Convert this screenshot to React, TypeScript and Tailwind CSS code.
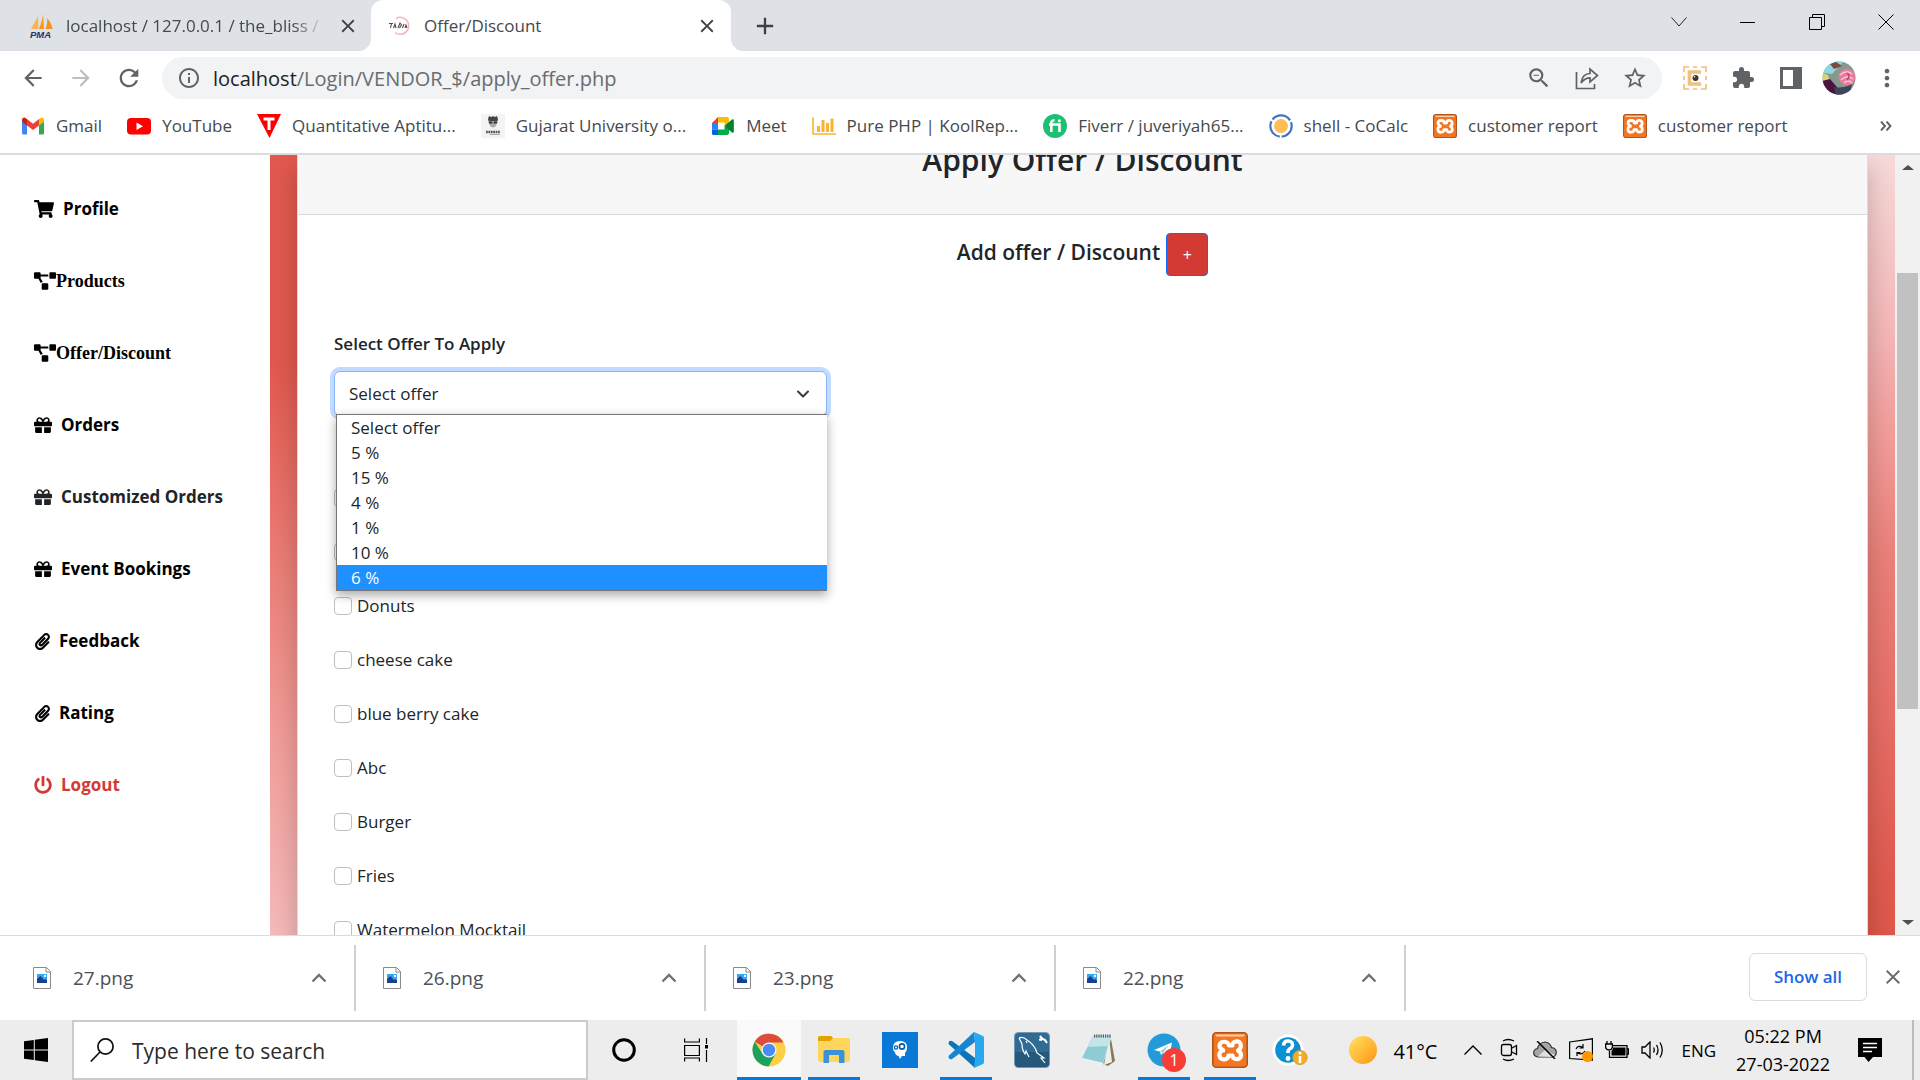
import React from "react";
import { FaShoppingCart, FaProjectDiagram, FaGift, FaPaperclip, FaPowerOff } from "react-icons/fa";
import {
  MdArrowBack,
  MdArrowForward,
  MdRefresh,
  MdStarBorder,
  MdExtension,
  MdMoreVert,
  MdClose,
  MdAdd,
  MdInfoOutline,
  MdZoomOut,
} from "react-icons/md";

const Sailboat = () => (
  <svg viewBox="0 0 24 24" className="size-6 shrink-0" aria-hidden="true">
    <path d="M8 2 L8.5 15 L1 15 C3 11 6 6 8 2Z" fill="#fbb45c" />
    <path d="M13 0 L14 15 L9 15 C11 10 12.500 5 13 0Z" fill="#f89c0e" />
    <path d="M17 4 C20 7 22 11 22.500 15 L15.500 15 C17 11 17.500 8 17 4Z" fill="#f6941f" />
    <text x="0" y="23.500" fontSize="9.500" fontWeight="700" fontStyle="italic" fill="#2c2f63" fontFamily="Liberation Sans, sans-serif">PMA</text>
  </svg>
);

const BlissMark = () => (
  <svg viewBox="0 0 24 24" className="size-6 shrink-0" aria-hidden="true">
    <path d="M8 4.500 A8.500 8.500 0 1 1 7 18.500" fill="none" stroke="#f2b6ba" strokeWidth="1.500" />
    <path d="M1 9.500 H5 M3.500 9.500 L2.500 14 M5.500 14 L7 10 L8 14 M10 14 L12 9 L13.500 11 L11.500 14 M14.500 14 L16 10 M17 14 L18 11 L19 14" fill="none" stroke="#55494c" strokeWidth="1.100" />
  </svg>
);

const Gmail = () => (
  <svg viewBox="0 0 24 24" className="size-6" aria-hidden="true">
    <path d="M1 6 V19 Q1 20.500 2.500 20.500 H6 V10Z" fill="#4285f4" />
    <path d="M23 6 V19 Q23 20.500 21.500 20.500 H18 V10Z" fill="#34a853" />
    <path d="M6 5 L12 9.700 L18 5 V11.500 L12 16 L6 11.500Z" fill="#ea4335" />
    <path d="M1 6 Q1 3.500 3.500 3.500 L6 5 V11.500 L1 7.800Z" fill="#c5221f" />
    <path d="M23 6 Q23 3.500 20.500 3.500 L18 5 V11.500 L23 7.800Z" fill="#fbbc04" />
  </svg>
);

const YouTube = () => (
  <svg viewBox="0 0 24 24" className="size-6" aria-hidden="true">
    <rect x="0" y="4" width="24" height="16.500" rx="4" fill="#f00" />
    <path d="M9.500 8.500 L16 12.200 L9.500 16Z" fill="#fff" />
  </svg>
);

const Testbook = () => (
  <svg viewBox="0 0 24 24" className="size-6" aria-hidden="true">
    <path d="M0 0 H24 L12.500 24Z" fill="#f00" />
    <path d="M6.500 3.500 H17.500 V6.500 H13.500 V16 H10.500 V6.500 H6.500Z" fill="#fff" />
  </svg>
);

const Genius = () => (
  <svg viewBox="0 0 24 24" className="size-6" aria-hidden="true">
    <rect width="24" height="24" fill="#f3f3f3" />
    <path d="M7 5 L8 2 L10 3 Q12 1.500 14 3 L16 2 L17 5 L16.500 7 H7.500Z" fill="#444" />
    <path d="M8 7 Q8 13 12 13.500 Q16 13 16 7Z" fill="#aaa" />
    <path d="M7.500 7.500 H11.300 V9.500 H8Z M12.700 7.500 H16.500 L16 9.500 H12.700Z" fill="#333" />
    <path d="M5 18 H19" stroke="#555" strokeWidth="2.400" strokeDasharray="1.800 .6" />
    <path d="M9 20.500 H19" stroke="#aaa" strokeWidth="1" />
  </svg>
);

const Meet = () => (
  <svg viewBox="0 0 24 24" className="size-6" aria-hidden="true">
    <path d="M1 9 L7 3 V9Z" fill="#ea4335" />
    <path d="M7 3 H16 Q18 3 18 5 V9 L13.500 12 V8.500 H7Z" fill="#fbbc04" />
    <path d="M1 9 H7 V15.500 H1Z" fill="#2684fc" />
    <path d="M1 15.500 H7 V21 H2.500 Q1 21 1 19.500Z" fill="#0066da" />
    <path d="M7 15.500 H13.500 V12 L18 15 V19 Q18 21 16 21 H7Z" fill="#00ac47" />
    <path d="M13.500 12 L21 5.500 Q22.800 4.500 22.800 6.500 V17.500 Q22.800 19.500 21 18.500Z" fill="#00832d" />
  </svg>
);

const Kool = () => (
  <svg viewBox="0 0 24 24" className="size-6" aria-hidden="true">
    <path d="M1 3.500 V20 H24" fill="none" stroke="#fbb230" strokeWidth="1.600" />
    <path d="M5 12 H8 V18 H5Z M9.500 6 H12.500 V18 H9.500Z M14 9 H17 V18 H14Z M18.500 4.500 H21.500 V18 H18.500Z" fill="#fbb230" />
  </svg>
);

const Fiverr = () => (
  <svg viewBox="0 0 24 24" className="size-6" aria-hidden="true">
    <circle cx="12" cy="12" r="12" fill="#1dbf73" />
    <path d="M8.300 18 V9 Q8.300 6.200 11.500 6.600 M6 10.500 H16.500 V18" fill="none" stroke="#fff" strokeWidth="2.600" />
    <circle cx="16.300" cy="6.800" r="1.500" fill="#fff" />
  </svg>
);

const CoCalc = () => (
  <svg viewBox="0 0 24 24" className="size-6" aria-hidden="true">
    <circle cx="12" cy="12" r="7" fill="#fdbf56" />
    <circle cx="12" cy="12" r="10.700" fill="none" stroke="#4474c0" strokeWidth="2.200" strokeDasharray="20.400 2" strokeDashoffset="-18" />
  </svg>
);

const Xampp = ({ className }: { className: string }) => (
  <svg viewBox="0 0 36 36" className={className} aria-hidden="true">
    <rect x=".8" y=".8" width="34.400" height="34.400" rx="3.500" fill="#f37623" stroke="#b3541a" strokeWidth="1.600" />
    <path d="M3 2.500 H33 L31.500 4.500 H4.500Z" fill="#fbd0a8" />
    <path
      d="M17 13.500 C17 9 8 8 7.500 13.500 C7.500 17 10.500 17 11.500 18.500 C8 19 7 21 7.500 24 C8.500 29 17 28 16.500 23.500 H20.500 C20 28 29 28.500 29 23.500 C29 21 28 19.500 26 18.500 C28.500 17 29.500 15 28.500 12 C27 8 19.500 9 20.500 13.500Z"
      fill="none"
      stroke="#fff"
      strokeWidth="4.200"
      strokeLinejoin="round"
    />
    <path d="M13 18.500 H24" stroke="#f37623" strokeWidth="2" />
  </svg>
);

const bookmarks: { label: string; icon: React.ReactNode }[] = [
  { label: "Gmail", icon: <Gmail /> },
  { label: "YouTube", icon: <YouTube /> },
  { label: "Quantitative Aptitu...", icon: <Testbook /> },
  { label: "Gujarat University o...", icon: <Genius /> },
  { label: "Meet", icon: <Meet /> },
  { label: "Pure PHP | KoolRep...", icon: <Kool /> },
  { label: "Fiverr / juveriyah65...", icon: <Fiverr /> },
  { label: "shell - CoCalc", icon: <CoCalc /> },
  { label: "customer report", icon: <Xampp className="size-6" /> },
  { label: "customer report", icon: <Xampp className="size-6" /> },
];

function TabStrip() {
  return (
    <div className="flex h-[51px] shrink-0 bg-[#dee1e6] text-[17px] text-[#45494d]">
      <div className="flex w-[371px] items-center gap-3 pr-[11px] pl-[30px]">
        <Sailboat />
        <span className="min-w-0 flex-1 overflow-hidden whitespace-nowrap [mask-image:linear-gradient(to_right,black_88%,transparent)]">
          localhost / 127.0.0.1 / the_bliss / o
        </span>
        <button aria-label="Close tab" className="grid size-6 place-items-center text-[#3c4043]">
          <MdClose className="size-[22px]" />
        </button>
      </div>
      <div className="relative flex w-[360px] items-center gap-3 rounded-t-xl bg-white pr-3 pl-[17px] before:absolute before:bottom-0 before:-left-3 before:size-3 before:bg-[radial-gradient(circle_at_0_0,transparent_12px,white_12px)] after:absolute after:-right-3 after:bottom-0 after:size-3 after:bg-[radial-gradient(circle_at_100%_0,transparent_12px,white_12px)]">
        <BlissMark />
        <span className="flex-1 whitespace-nowrap">Offer/Discount</span>
        <button aria-label="Close tab" className="grid size-6 place-items-center text-[#3c4043]">
          <MdClose className="size-[22px]" />
        </button>
      </div>
      <button aria-label="New tab" className="ml-5 grid w-6 place-items-center text-[#3c4043]">
        <MdAdd className="size-7" />
      </button>
      <div className="ml-auto flex h-[43px]">
        <button aria-label="Search tabs" className="grid w-[69px] place-items-center">
          <svg viewBox="0 0 16 16" className="size-4"><path d="M.5 3.500 L8 12 L15.500 3.500" fill="none" stroke="#222" /></svg>
        </button>
        <button aria-label="Minimize" className="grid w-[69px] place-items-center">
          <svg viewBox="0 0 16 16" className="size-4"><path d="M0 8.500 H15" stroke="#000" /></svg>
        </button>
        <button aria-label="Restore" className="grid w-[69px] place-items-center">
          <svg viewBox="0 0 16 16" className="size-4"><path d="M.5 3.500 H12.500 V15.500 H.5Z M3.500 3.500 V.5 H15.500 V12.500 H12.500" fill="none" stroke="#000" /></svg>
        </button>
        <button aria-label="Close window" className="grid w-[69px] place-items-center">
          <svg viewBox="0 0 16 16" className="size-4"><path d="M.5 .5 L15.500 15.500 M15.500 .5 L.5 15.500" stroke="#000" /></svg>
        </button>
      </div>
    </div>
  );
}

function Toolbar() {
  return (
    <div className="flex h-[54px] shrink-0 items-center pr-[9px] pl-[9px] text-[#5f6368]">
      <button aria-label="Back" className="grid w-12 place-items-center"><MdArrowBack className="size-[26px]" /></button>
      <button aria-label="Forward" className="grid w-12 place-items-center text-[#bcbec1]"><MdArrowForward className="size-[26px]" /></button>
      <button aria-label="Reload" className="grid w-12 place-items-center"><MdRefresh className="size-7" /></button>
      <div className="ml-[9px] flex h-[42px] flex-1 items-center rounded-full bg-[#f1f3f4] pr-[3px] pl-[15px]">
        <MdInfoOutline className="size-6 shrink-0" />
        <div className="ml-3 flex-1 pt-px text-[20px] text-[#696c70]">
          <span className="text-[#202124]">localhost</span>/Login/VENDOR_$/apply_offer.php
        </div>
        <button aria-label="Zoom" className="grid w-12 place-items-center"><MdZoomOut className="size-[26px]" /></button>
        <button aria-label="Share" className="grid w-12 place-items-center">
          <svg viewBox="0 0 24 24" className="size-6" fill="none" stroke="currentColor" strokeWidth="1.700">
            <path d="M1.500 6 V22.500 H19.500 V18" />
            <path d="M6 17 C7 10.500 10 7.500 15 7.500 V3 L22.500 9.500 L15 16 V11.800 C11 11.800 8.500 13.500 6 17Z" />
          </svg>
        </button>
        <button aria-label="Bookmark this page" className="grid w-12 place-items-center"><MdStarBorder className="size-[26px]" /></button>
      </div>
      <button aria-label="Screen capture" className="ml-[9px] grid w-12 place-items-center">
        <svg viewBox="0 0 24 24" className="size-6" fill="none">
          <path d="M1 6 V1 H6 M10 1 H14 M18 1 H23 V6 M1 18 V23 H6 M10 23 H14 M18 23 H23 V18 M1 10 V14 M23 10 V14" stroke="#f0bd7b" strokeWidth="1.600" />
          <path d="M18 6 H6.500 V18 H18" stroke="#f0c07e" strokeWidth="3.600" />
          <circle cx="12.500" cy="12" r="3" fill="#3b3530" />
          <circle cx="11.500" cy="10.800" r=".8" fill="#fff" />
        </svg>
      </button>
      <button aria-label="Extensions" className="grid w-12 place-items-center"><MdExtension className="size-6" /></button>
      <button aria-label="Side panel" className="grid w-12 place-items-center">
        <svg viewBox="0 0 22 22" className="size-[22px]"><path d="M0 0 H22 V22 H0Z M3 3 V19 H13 V3Z" fill="currentColor" fillRule="evenodd" /></svg>
      </button>
      <button aria-label="Account" className="grid w-12 place-items-center">
        <svg viewBox="0 0 34 34" className="size-[34px]">
          <defs><clipPath id="avatar"><circle cx="17" cy="17" r="16.500" /></clipPath></defs>
          <g clipPath="url(#avatar)">
            <rect width="34" height="34" fill="#87988c" />
            <path d="M0 0 H22 L10 13 L0 12Z" fill="#8fd7e0" />
            <path d="M8 3 L14 1 L20 5 L12 8Z" fill="#7a4a3c" />
            <path d="M0 12 L6 14 L8 20 L0 22Z" fill="#d8d27a" />
            <path d="M0 20 L8 18 L14 25 L22 34 H0Z" fill="#4b1440" />
            <path d="M12 26 Q20 28 30 23 L28 34 H14Z" fill="#39465e" />
            <circle cx="25" cy="16" r="8.500" fill="#e77c9c" />
            <path d="M18 14 Q24 8 30 13 M19 19 Q25 13 31 18 M22 22 Q26 18 30 22" stroke="#f9c4d2" strokeWidth="1.600" fill="none" />
            <path d="M25 12 Q29 15 25 19" stroke="#bf3f6c" strokeWidth="1.500" fill="none" />
          </g>
        </svg>
      </button>
      <button aria-label="Menu" className="grid w-12 place-items-center"><MdMoreVert className="size-7" /></button>
    </div>
  );
}

function BookmarksBar() {
  return (
    <nav aria-label="Bookmarks" className="flex h-[50px] shrink-0 items-center gap-[25px] border-b-2 border-[#dadcde] pr-7 pb-[6px] pl-[21px] text-[17px] text-[#45494d]">
      {bookmarks.map((b, i) => (
        <a key={i} href="#" className="flex items-center gap-[11px] whitespace-nowrap">
          {b.icon}
          {b.label}
        </a>
      ))}
      <button aria-label="More bookmarks" className="ml-auto">
        <svg viewBox="0 0 12 10" className="h-[10px] w-3"><path d="M1 .5 L5 5 L1 9.500 M6.500 .5 L10.500 5 L6.500 9.500" fill="none" stroke="#5f6368" strokeWidth="1.900" /></svg>
      </button>
    </nav>
  );
}

const gift = <FaGift className="size-[18px]" />;
const clip = <FaPaperclip className="size-[17px]" />;
const diagram = <FaProjectDiagram className="h-[18px] w-[22px]" />;

function Sidebar() {
  const items = [
    { label: "Profile", icon: <FaShoppingCart className="h-[18px] w-5" />, cls: "gap-[9px]" },
    { label: "Products", icon: diagram, cls: "font-['Liberation_Serif',serif] text-[18px]" },
    { label: "Offer/Discount", icon: diagram, cls: "font-['Liberation_Serif',serif] text-[18px]" },
    { label: "Orders", icon: gift, cls: "gap-[9px]" },
    { label: "Customized Orders", icon: gift, cls: "gap-[9px] text-[#212529]" },
    { label: "Event Bookings", icon: gift, cls: "gap-[9px]" },
    { label: "Feedback", icon: clip, cls: "gap-2" },
    { label: "Rating", icon: clip, cls: "gap-2" },
    { label: "Logout", icon: <FaPowerOff className="size-[18px]" />, cls: "gap-[9px] text-[#d33a33]" },
  ];
  return (
    <nav aria-label="Vendor" className="z-20 flex w-[270px] shrink-0 flex-col bg-white pt-[18px] pl-[34px] font-bold text-[17px] text-black">
      {items.map((it) => (
        <a key={it.label} href="#" className={`flex h-[72px] items-center whitespace-nowrap ${it.cls}`}>
          {it.icon}
          {it.label}
        </a>
      ))}
    </nav>
  );
}

const offers = ["Select offer", "5 %", "15 %", "4 %", "1 %", "10 %", "6 %"];
/* The first two products have no name yet. */
const products = ["", "", "Donuts", "cheese cake", "blue berry cake", "Abc", "Burger", "Fries", "Watermelon Mocktail"];

function OfferForm() {
  return (
    <form className="px-9 pt-[17px] text-[17px] text-[#212529]">
      <div className="flex justify-center gap-[6px]">
        <h2 className="pt-[5px] text-[21px] leading-[30px] font-semibold">Add offer / Discount</h2>
        <button type="button" aria-label="Add offer" className="mt-px h-[43px] w-[42px] rounded border border-[#0d6efd] bg-[#d33a33] text-[16px] text-white">
          +
        </button>
      </div>
      <label htmlFor="offer" className="mt-[54px] block leading-[27px] font-semibold">Select Offer To Apply</label>
      <div className="relative mt-[14px] w-[493px]">
        <select id="offer" defaultValue="Select offer" className="block h-[45px] w-full appearance-none rounded-md border border-[#86b7fe] bg-white px-[14px] ring-4 ring-[#c2dbfe] outline-none">
          {offers.map((o) => (
            <option key={o}>{o}</option>
          ))}
        </select>
        <svg viewBox="0 0 16 16" className="pointer-events-none absolute top-[15px] right-4 size-4" aria-hidden="true">
          <path d="M3 5.500 L8 10.500 L13 5.500" fill="none" stroke="#343a40" strokeWidth="2" strokeLinecap="round" strokeLinejoin="round" />
        </svg>
        <ul role="listbox" aria-label="Offers" className="absolute top-[43px] right-0 left-[2px] z-10 border border-r-0 border-[#767676] bg-white shadow-[0_4px_10px_rgba(0,0,0,0.35)]">
          {offers.map((o) => (
            <li
              key={o}
              role="option"
              aria-selected={o === "6 %"}
              className="flex h-[25px] items-center px-[14px] whitespace-pre aria-selected:bg-[#1e90ff] aria-selected:text-white"
            >
              {o}
            </li>
          ))}
        </ul>
      </div>
      <fieldset aria-label="Products" className="pt-[55px]">
        {products.map((p, i) => (
          <label key={i} className="flex h-[54px] items-center gap-[5px]">
            <input type="checkbox" aria-label={p || "Product"} className="size-[18px] appearance-none rounded border border-[#bfbfbf] bg-white" />
            {p}
          </label>
        ))}
      </fieldset>
    </form>
  );
}

function PageView() {
  return (
    <div className="flex min-h-0 flex-1 overflow-hidden">
      <Sidebar />
      <div className="w-[27px] shrink-0 bg-[linear-gradient(177deg,#e1594e_0%,#e1594e_27%,#ea7a73_50%,#f19c98_74%,#f5baba_100%)]" />
      <main className="z-10 h-fit min-w-0 flex-1 border-x border-[#dcdcdc] bg-white shadow-[0_12px_24px_rgba(0,0,0,0.22)]">
        <header className="-mt-5 h-20 border-b border-[#d9d9d9] bg-[#f7f7f7]">
          <h1 className="pt-[3px] text-center text-[30px] leading-[44px] font-semibold text-[#212529]">Apply Offer / Discount</h1>
        </header>
        <OfferForm />
      </main>
      <div className="w-[27px] shrink-0 bg-[linear-gradient(177deg,#f6dad8_0%,#f5b8b9_22%,#f19b97_37%,#ea8079_52%,#e66e66_72%,#e05b4f_92%,#de574a_100%)]" />
      <div className="z-20 flex w-[25px] shrink-0 flex-col items-center bg-[#f1f1f1] py-[10px]">
        <svg viewBox="0 0 12 5" className="h-[5px] w-3"><path d="M0 5 L6 0 L12 5Z" fill="#4f4f4f" /></svg>
        <div className="flex w-full flex-1 flex-col items-center">
          <div className="flex-[103]" />
          <div className="w-[21px] flex-[436] bg-[#c1c1c1]" />
          <div className="flex-[211]" />
        </div>
        <svg viewBox="0 0 12 5" className="h-[5px] w-3"><path d="M0 0 L6 5 L12 0Z" fill="#4f4f4f" /></svg>
      </div>
    </div>
  );
}

function DownloadsBar() {
  return (
    <div className="flex h-[85px] shrink-0 items-center border-t border-[#dadcde] bg-white pr-[15px] text-[19px] text-[#4d5156]">
      {["27.png", "26.png", "23.png", "22.png"].map((f, i) => (
        <div key={f} className={`flex h-[66px] items-center border-r-2 border-[#cfcfcf] pr-[27px] ${i === 0 ? "w-[356px] pl-[33px]" : "w-[350px] pl-[27px]"}`}>
          <svg viewBox="0 0 18 22" className="h-[22px] w-[18px]" aria-hidden="true">
            <path d="M.5 .5 H13.500 L17.500 4.500 V21.500 H.5Z" fill="#fff" stroke="#8a8a8a" />
            <path d="M13 .5 V5 H17.500" fill="none" stroke="#8a8a8a" />
            <rect x="4" y="7" width="10" height="9" fill="#2fa8ee" />
            <path d="M4 16 V12 L7.500 9 L11 13 L12.500 12 L14 13.500 V16Z" fill="#163f92" />
            <circle cx="12" cy="9" r="1.200" fill="#fff" />
          </svg>
          <span className="flex-1 pl-[22px]">{f}</span>
          <button aria-label={`Options for ${f}`}>
            <svg viewBox="0 0 16 10" className="h-[10px] w-4"><path d="M1.500 8.500 L8 2 L14.500 8.500" fill="none" stroke="#6e7277" strokeWidth="2.400" /></svg>
          </button>
        </div>
      ))}
      <button className="mb-[3px] ml-auto h-[48px] w-[118px] rounded-md border border-[#dadce0] text-[17px] font-semibold text-[#1a68e8]">Show all</button>
      <button aria-label="Close downloads" className="mb-[3px] ml-[14px] grid size-6 place-items-center text-[#6b6e72]">
        <MdClose className="size-6" />
      </button>
    </div>
  );
}

const Chrome = () => (
  <svg viewBox="0 0 34 34" className="size-[34px]">
    <circle cx="17" cy="17" r="16.500" fill="#fdcf43" />
    <path d="M17 17 L2.700 8.700 A16.500 16.500 0 0 1 31.500 9.500 H17Z" fill="#dc4b3e" />
    <path d="M2.700 8.700 A16.500 16.500 0 0 0 16.500 33.500 L23.500 21 L17 17 L10.500 20.500Z" fill="#1ba160" />
    <circle cx="17" cy="17" r="7.600" fill="#f4f4f4" />
    <circle cx="17" cy="17" r="6.200" fill="#4c8bf5" />
  </svg>
);

const Explorer = () => (
  <svg viewBox="0 0 34 30" className="h-[30px] w-[34px]">
    <path d="M1 3 Q1 1 3 1 H14 L16 3 H31 Q33 3 33 5 V25 Q33 27 31 27 H3 Q1 27 1 25Z" fill="#ffd55e" />
    <path d="M1 3 Q1 1 3 1 H14 L16 3 L13 6 H1Z" fill="#e2a200" />
    <path d="M6.500 28 V17 Q6.500 15 8.500 15 H25.500 Q27.500 15 27.500 17 V28 H22 V20 H12 V28Z" fill="#3a93d6" />
  </svg>
);

const HeadApp = () => (
  <svg viewBox="0 0 36 36" className="size-9">
    <rect width="36" height="36" fill="#0a78d6" />
    <path d="M11 16 Q11 9 18 9 Q25.500 9 25 16 Q25 19 23 21 V24 H20 L18 27 L16.500 24 Q13 23 13 20 Q11 19 11 16Z" fill="#fff" />
    <circle cx="20" cy="14.500" r="2.600" fill="#fff" stroke="#0a5ba6" strokeWidth="1.600" />
    <circle cx="14" cy="15.500" r="1.600" fill="#fff" stroke="#0a5ba6" strokeWidth="1.200" />
  </svg>
);

const VsCode = () => (
  <svg viewBox="0 0 36 36" className="size-9">
    <path d="M1 9.500 Q2.500 8 4.500 9.300 L27 26 V36 L1 12.500 Q0 11 1 9.500Z" fill="#0b74ba" />
    <path d="M26 0 L1 23.500 Q0 25 1 26.500 Q2.500 28 4.500 26.700 L27 10Z" fill="#1486d2" />
    <path d="M26 0 L35 4 Q36 4.500 36 6 V30 Q36 31.500 35 32 L26 36 L27 27 V9Z" fill="#28a8ef" />
  </svg>
);

const MySql = () => (
  <svg viewBox="0 0 36 36" className="size-9">
    <rect x=".5" y=".5" width="35" height="35" rx="4" fill="#2f6b93" stroke="#7397ae" />
    <path d="M1 20 H35 V31 Q35 35 31 35 H5 Q1 35 1 31Z" fill="#25587a" />
    <path d="M5 6 Q9 4 13 8 Q21 13 23 21 L30 26 L27 26 L31 31 M5 6 L8 12 Q8 18 11 22 L12 19 L15 25 M12 9 L13 11" fill="none" stroke="#fff" strokeWidth="1.200" />
    <path d="M26 4 L28 6.500 L31 8 L33 11 M25 7.500 L28 8" fill="none" stroke="#fff" strokeWidth="2.200" />
  </svg>
);

const Notepad = () => (
  <svg viewBox="0 0 34 34" className="size-[34px]">
    <path d="M30 6 L34 28 L27 33 L22 31Z" fill="#8a7a54" />
    <path d="M28 5 L31 29 L23 32Z" fill="#eceff0" />
    <path d="M12 3 H30 L22 30 L1 25Z" fill="#8fcbd5" />
    <path d="M12 3 H30 L27 13 L7 14Z" fill="#c2e5ea" />
    <path d="M13 3 H30" stroke="#555" strokeWidth="3" strokeDasharray="1.200 1" />
    <path d="M1 25 L22 30 L24 31 L3 27Z" fill="#e8f4f5" />
  </svg>
);

const Telegram = () => (
  <div className="relative">
    <svg viewBox="0 0 34 34" className="size-[34px]">
      <circle cx="17" cy="17" r="16.500" fill="#239bd8" />
      <path d="M7 17 L25 9.500 L22 25 L16 20 L14 22 L13 18.500Z" fill="#fff" />
      <path d="M13 18.500 L22 12 L16 20Z" fill="#9ccbe6" />
    </svg>
    <span className="absolute -right-[5px] -bottom-[5px] grid size-6 place-items-center rounded-full bg-[#f73e36] text-[16px] text-white">1</span>
  </div>
);

const Help = () => (
  <svg viewBox="0 0 36 34" className="h-[34px] w-9">
    <circle cx="16" cy="17" r="15.500" fill="#fff" />
    <circle cx="16" cy="17" r="12.800" fill="#0a90d4" />
    <path d="M11.500 12.500 Q12 7.500 16.500 8 Q21 8.500 20.500 12.500 Q20 15 17.500 16 Q16 17 16 20" fill="none" stroke="#fff" strokeWidth="3.600" />
    <circle cx="16" cy="25.500" r="2.400" fill="#fff" />
    <circle cx="28" cy="24.500" r="7.200" fill="#f2ab22" stroke="#d09a3c" strokeWidth=".8" />
    <path d="M28 23 V30 M28 19 V21.500" stroke="#fff" strokeWidth="2.600" />
  </svg>
);

function Taskbar() {
  const apps = [
    { name: "File Explorer", icon: <Explorer />, open: true },
    { name: "Assistant", icon: <HeadApp />, open: false },
    { name: "Visual Studio Code", icon: <VsCode />, open: true },
    { name: "MySQL Workbench", icon: <MySql />, open: false },
    { name: "Notepad", icon: <Notepad />, open: false },
    { name: "Telegram", icon: <Telegram />, open: true },
    { name: "XAMPP", icon: <Xampp className="size-9" />, open: true },
  ];
  return (
    <footer className="flex h-[60px] shrink-0 bg-[#ededed] text-black">
      <button aria-label="Start" className="grid w-[72px] place-items-center">
        <svg viewBox="0 0 24 24" className="size-6"><path d="M0 3.300 L9.800 2 V11.500 H0Z M10.800 1.800 L24 0 V11.500 H10.800Z M0 12.500 H9.800 V22 L0 20.700Z M10.800 12.500 H24 V24 L10.800 22.200Z" /></svg>
      </button>
      <label className="flex w-[516px] items-center border-2 border-[#cbcbcb] bg-white pl-4">
        <svg viewBox="0 0 24 24" className="size-6 shrink-0" fill="none" stroke="#111" strokeWidth="1.700"><circle cx="15.500" cy="8.500" r="7.600" /><path d="M10 14 L.8 23.500" /></svg>
        <input aria-label="Search" placeholder="Type here to search" className="min-w-0 flex-1 bg-transparent pt-1 pl-[18px] text-[21px] outline-none placeholder:text-[#2b2b2b]" />
      </label>
      <button aria-label="Cortana" className="grid w-[72px] place-items-center">
        <svg viewBox="0 0 24 24" className="size-6"><circle cx="12" cy="12" r="10.300" fill="none" stroke="#000" strokeWidth="3" /></svg>
      </button>
      <button aria-label="Task view" className="grid w-[72px] place-items-center">
        <svg viewBox="0 0 24 24" className="size-6" fill="none" stroke="#000" strokeWidth="1.200">
          <path d="M.6 7.500 H15.400 V17.500 H.6Z M.6 .5 V4 H15.400 V.5 M.6 23.500 V20 H15.400 V23.500 M22.500 0 V6 M22.500 12 V24" />
          <path d="M21 7 H24 V10.500 H21Z" fill="#000" stroke="none" />
        </svg>
      </button>
      <button aria-label="Google Chrome" className="ml-[5px] grid w-16 place-items-center border-b-[3px] border-[#0a78d6] bg-[#fafafa] pt-[3px]">
        <Chrome />
      </button>
      {apps.map((a) => (
        <button key={a.name} aria-label={a.name} className="flex w-[66px] justify-center">
          <span className={`grid h-full w-[52px] place-items-center border-b-[3px] pt-[3px] ${a.open ? "border-[#0a78d6]" : "border-transparent"}`}>{a.icon}</span>
        </button>
      ))}
      <button aria-label="Help" className="grid w-[54px] place-items-center"><Help /></button>
      <div className="ml-auto flex items-center">
        <button className="flex items-center gap-4 text-[20px]">
          <span className="size-7 rounded-full bg-linear-to-br from-[#ffe45c] to-[#ff9200]" />
          <span className="pt-1">41°C</span>
        </button>
        <button aria-label="Hidden icons" className="ml-[18px] grid w-9 place-items-center">
          <svg viewBox="0 0 18 10" className="h-[10px] w-[18px]"><path d="M.5 9.500 L9 1 L17.500 9.500" fill="none" stroke="#000" strokeWidth="1.400" /></svg>
        </button>
        <button aria-label="Meet now" className="grid w-9 place-items-center">
          <svg viewBox="0 0 18 24" className="h-6 w-[18px]" fill="none" stroke="#000" strokeWidth="1.300"><rect x="1.500" y="6.500" width="10" height="11" rx="2" /><path d="M12 10 L16.500 7.500 V16.500 L12 14 M3 3 Q8 0 14 3 M3 21 Q8 24 14 21" /></svg>
        </button>
        <button aria-label="Cloud sync" className="grid w-9 place-items-center">
          <svg viewBox="0 0 24 18" className="h-[18px] w-6"><path d="M5 16 Q.7 15.500 .7 11.500 Q1 8 4.500 7.500 Q6 1.500 12 1 Q17 1.500 18.500 6.500 Q23.300 7 23.300 11.500 Q23 15.500 19 16Z" fill="#a5a5a5" stroke="#333" strokeWidth="1.200" /><path d="M5 15.500 L12 9 L22 14 L19 16Z" fill="#e0e0e0" /><path d="M4 0 L22 18" stroke="#000" strokeWidth="1.500" /></svg>
        </button>
        <button aria-label="Update" className="grid w-9 place-items-center">
          <svg viewBox="0 0 24 24" className="size-6" fill="none" stroke="#000" strokeWidth="1.200"><path d="M.6 4 L23.400 .8 V22 L.6 20.500Z" /><path d="M7 11 Q9 6.500 14 9.500 M14 6 V10 H10.500 M16 13 Q13 17.500 8.500 15 M8 18 V14.500 H11.500" /><circle cx="18.500" cy="18.500" r="5.500" fill="#ff9500" stroke="none" /></svg>
        </button>
        <button aria-label="Battery" className="grid w-9 place-items-center">
          <svg viewBox="0 0 24 18" className="h-[18px] w-6" fill="none" stroke="#000" strokeWidth="1.300"><path d="M7 4.700 H22 V16.300 H4.500 V10 M22 8 H23.500 V13 H22" /><path d="M8 6.500 H20.500 V14.500 H6.500 V10 L8 8Z" fill="#000" stroke="none" /><path d="M2 0 V3 M6 0 V3 M.6 3 H7.400 V6 Q7 9 4 9 Q1 9 .6 6Z" fill="#ededed" /></svg>
        </button>
        <button aria-label="Volume" className="grid w-9 place-items-center">
          <svg viewBox="0 0 24 18" className="h-[18px] w-6" fill="none" stroke="#000" strokeWidth="1.300"><path d="M1 6 H4 L9 1 V17 L4 12 H1Z" /><path d="M12.500 6.500 Q14 9 12.500 11.500 M15.500 4 Q18.500 9 15.500 14 M19 1.500 Q23.500 9 19 16.500" /></svg>
        </button>
        <button className="ml-[10px] pt-px text-[17px]">ENG</button>
        <button className="ml-[20px] text-center text-[18px] leading-[28px]">
          05:22 PM
          <br />
          27-03-2022
        </button>
        <button aria-label="Notifications" className="mr-[30px] ml-[28px]">
          <svg viewBox="0 0 24 24" className="size-6"><path d="M0 0 H24 V19 H15 L10.500 24 L6.500 19 H0Z" /><path d="M5 5.500 H19 M5 9.500 H19 M5 13.500 H14" stroke="#fff" strokeWidth="1.300" /></svg>
        </button>
        <div className="mr-[6px] h-[60px] w-[2px] bg-[#bdbdbd]" />
      </div>
    </footer>
  );
}

export default function App() {
  return (
    <div className="flex h-screen flex-col overflow-hidden bg-white font-['Open_Sans','Noto_Sans',sans-serif]">
      <TabStrip />
      <Toolbar />
      <BookmarksBar />
      <PageView />
      <DownloadsBar />
      <Taskbar />
    </div>
  );
}
